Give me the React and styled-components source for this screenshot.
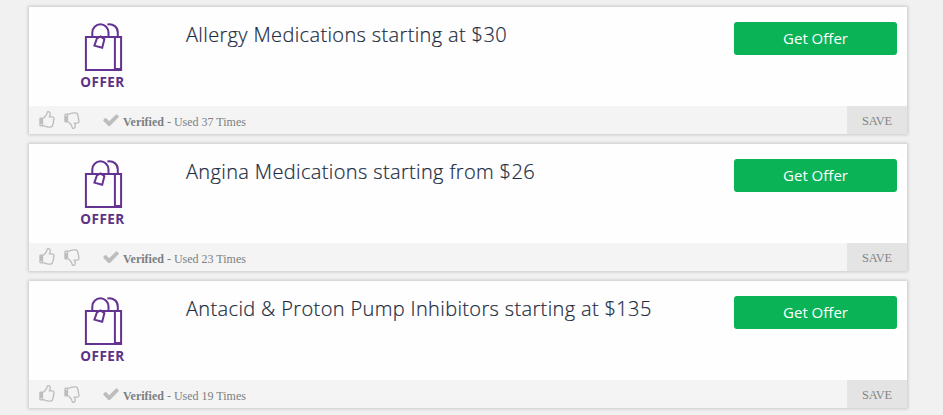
import React from 'react';
import styled, { createGlobalStyle } from 'styled-components';

const GlobalStyle = createGlobalStyle`
  * { box-sizing: border-box; }
  body { margin: 0; background: #f1f1f1; overflow: hidden; }
`;

const OfferList = styled.main`
  width: 943px;
  padding: 7px 36px 7px 29px;
  display: flex;
  flex-direction: column;
  gap: 10px;
`;

const Card = styled.article`
  width: 878px;
  height: 127px;
  background: #fefefe;
  box-shadow: 0 0 3px 1px rgba(0, 0, 0, 0.17);
`;

const CardBody = styled.div`
  height: 99px;
  display: grid;
  grid-template-columns: 147px 1fr 163px;
  padding-right: 10px;
`;

const OfferKind = styled.div`
  display: flex;
  flex-direction: column;
  align-items: center;
  padding-top: 15px;
`;

const BagSvg = styled.svg`
  display: block;
  width: 45px;
  height: 50px;
`;

const KindLabel = styled.span`
  font: 700 13.5px/18px 'Open Sans', sans-serif;
  letter-spacing: 0.45px;
  color: #5b3284;
  margin-top: 1px;
`;

const Title = styled.h2`
  margin: 0;
  padding: 14px 0 0 10px;
  font: 300 20px/27px 'Open Sans', sans-serif;
  letter-spacing: 0.36px;
  color: #1c2c3e;
  -webkit-text-stroke: 0.2px #1c2c3e;
  white-space: nowrap;
`;

const OfferButton = styled.button`
  margin-top: 15px;
  height: 33px;
  padding: 0;
  border: 0;
  border-radius: 3px;
  background: #0ab356;
  color: #fff;
  font: 400 15px/33px 'Open Sans', sans-serif;
`;

const CardFooter = styled.footer`
  height: 28px;
  display: flex;
  align-items: center;
  padding-left: 9px;
  background: #f4f4f4;
  color: #7c7f81;
  font: 12px/28px 'Liberation Serif', serif;
`;

const FooterIcon = styled.svg`
  display: block;
  flex: none;
  width: 18px;
  height: 18px;
  fill: #bdbdbd;
  margin-right: ${(p) => p.$gap || 0}px;
  transform: ${(p) => (p.$flip ? 'scaleY(-1)' : 'none')};
`;

const Usage = styled.span`
  padding-top: 3px;
  white-space: nowrap;
`;

const SaveButton = styled.button`
  margin-left: auto;
  width: 60px;
  height: 28px;
  padding: 3px 0 0;
  border: 0;
  background: #e4e4e4;
  color: #858585;
  font: 12.4px/25px 'Liberation Serif', serif;
  letter-spacing: -0.2px;
`;

const THUMB =
  'M384 1344q0-26-19-45t-45-19-45 19-19 45 19 45 45 19 45-19 19-45zm1152-576q0-51-39-89.5t-89-38.5h-352q0-58 48-159.5t48-160.5q0-98-32-145t-128-47q-26 26-38 85t-30.5 125.5-59.5 109.5q-22 23-77 91-4 5-23 30t-31.5 41-34.5 42.5-40 44-38.5 35.5-40 27-35.5 9h-32v640h32q13 0 31.5 3t33 6.5 38 11 35 11.5 35.5 12.5 29 10.5q211 73 342 73h121q192 0 192-167 0-26-5-56 30-16 47.5-52.5t17.5-73.5-18-69q53-50 53-119 0-25-10-55.5t-25-47.5q32-1 53.5-47t21.5-81zm128-1q0 89-49 163 9 33 9 69 0 77-38 144 3 21 3 43 0 101-60 178 1 139-85 219.5t-227 80.5h-129q-96 0-189.5-22.5t-216.5-65.5q-116-40-138-40h-288q-53 0-90.5-37.5t-37.5-90.5v-640q0-53 37.5-90.5t90.5-37.5h274q36-24 137-155 58-75 107-128 24-25 35.5-85.5t30.5-126.5 62-108q39-37 90-37 84 0 151 32.5t102 101.5 35 186q0 93-48 192h176q104 0 180 76t76 179z';
const CHECK =
  'M1671 566q0 40-28 68l-724 724-136 136q-28 28-68 28t-68-28l-136-136-362-362q-28-28-28-68t28-68l136-136q28-28 68-28t68 28l294 295 656-657q28-28 68-28t68 28l136 136q28 28 28 68z';

const Bag = () => (
  <BagSvg viewBox="0 0 45 50" fill="none" stroke="#643291" strokeWidth="2">
    <path d="M5.9 14.9H41.1V48.1H5.9Z" />
    <path d="M34.9 14.9V48.1M34.9 47H41.1" />
    <path d="M12.3 14.5V10.4A8.1 8.1 0 0 1 28.5 10.4V14.5" />
    <path d="M27.4 2.4C33.5 1.6 37.8 5 37.8 10.5V14.5" />
    <path d="M16.9 16.4L20.6 14.4L24.4 17.2L22.2 25.8L14.4 23.6Z" />
  </BagSvg>
);

const offers = [
  { title: 'Allergy Medications starting at $30', used: 37 },
  { title: 'Angina Medications starting from $26', used: 23 },
  { title: 'Antacid & Proton Pump Inhibitors starting at $135', used: 19 },
];

const OfferCard = ({ title, used }) => (
  <Card>
    <CardBody>
      <OfferKind>
        <Bag />
        <KindLabel>OFFER</KindLabel>
      </OfferKind>
      <Title>{title}</Title>
      <OfferButton>Get Offer</OfferButton>
    </CardBody>
    <CardFooter>
      <FooterIcon viewBox="0 0 1792 1792" $gap={7}><path d={THUMB} /></FooterIcon>
      <FooterIcon viewBox="0 0 1792 1792" $gap={21} $flip><path d={THUMB} /></FooterIcon>
      <FooterIcon viewBox="0 0 1792 1792" $gap={3}><path d={CHECK} /></FooterIcon>
      <Usage><b>Verified</b> - Used {used} Times</Usage>
      <SaveButton>SAVE</SaveButton>
    </CardFooter>
  </Card>
);

export default function App() {
  return (
    <>
      <GlobalStyle />
      <OfferList>
        {offers.map((offer) => (
          <OfferCard key={offer.title} {...offer} />
        ))}
      </OfferList>
    </>
  );
}
